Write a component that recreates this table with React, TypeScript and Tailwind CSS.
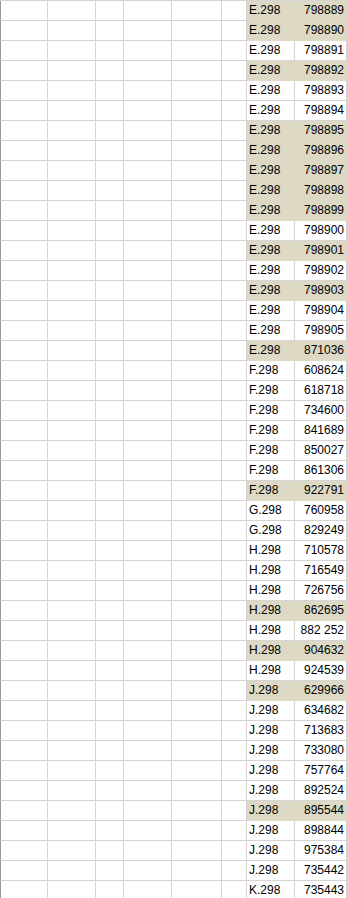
const rows: [string, string, boolean][] = [
  ['E.298', '798889', true],
  ['E.298', '798890', true],
  ['E.298', '798891', false],
  ['E.298', '798892', true],
  ['E.298', '798893', false],
  ['E.298', '798894', false],
  ['E.298', '798895', true],
  ['E.298', '798896', true],
  ['E.298', '798897', true],
  ['E.298', '798898', true],
  ['E.298', '798899', true],
  ['E.298', '798900', false],
  ['E.298', '798901', true],
  ['E.298', '798902', false],
  ['E.298', '798903', true],
  ['E.298', '798904', false],
  ['E.298', '798905', false],
  ['E.298', '871036', true],
  ['F.298', '608624', false],
  ['F.298', '618718', false],
  ['F.298', '734600', false],
  ['F.298', '841689', false],
  ['F.298', '850027', false],
  ['F.298', '861306', false],
  ['F.298', '922791', true],
  ['G.298', '760958', false],
  ['G.298', '829249', false],
  ['H.298', '710578', false],
  ['H.298', '716549', false],
  ['H.298', '726756', false],
  ['H.298', '862695', true],
  ['H.298', '882 252', false],
  ['H.298', '904632', true],
  ['H.298', '924539', false],
  ['J.298', '629966', true],
  ['J.298', '634682', false],
  ['J.298', '713683', false],
  ['J.298', '733080', false],
  ['J.298', '757764', false],
  ['J.298', '892524', false],
  ['J.298', '895544', true],
  ['J.298', '898844', false],
  ['J.298', '975384', false],
  ['J.298', '735442', false],
  ['K.298', '735443', false],
];

export default function App() {
  return (
    <div
      className="w-[347px] h-[898px] overflow-hidden bg-white text-[12px] leading-[19px] text-black"
      style={{ fontFamily: '"Liberation Sans", Arial, sans-serif' }}
    >
      <div className="border-t border-[#d4d4d4]">
        {rows.map(([code, num, hl], i) => {
          const cell = hl
            ? 'bg-[#ddd9c4] border-b border-r border-[#ddd9c4]'
            : 'border-b border-r border-[#d4d4d4]';
          return (
            <div
              key={i}
              className="grid grid-cols-[48px_48px_28px_48px_50px_25px_48px_52px] h-[20px]"
            >
              <div className="border-l border-l-[#9a9a9a] border-b border-r border-[#d4d4d4]" />
              <div className="border-b border-r border-[#d4d4d4]" />
              <div className="border-b border-r border-[#d4d4d4]" />
              <div className="border-b border-r border-[#d4d4d4]" />
              <div className="border-b border-r border-[#d4d4d4]" />
              <div className="border-b border-r border-[#d4d4d4]" />
              <div className={`${cell} pl-[2px]`}>{code}</div>
              <div className={`${cell} pr-[2px] text-right`}>{num}</div>
            </div>
          );
        })}
      </div>
    </div>
  );
}
